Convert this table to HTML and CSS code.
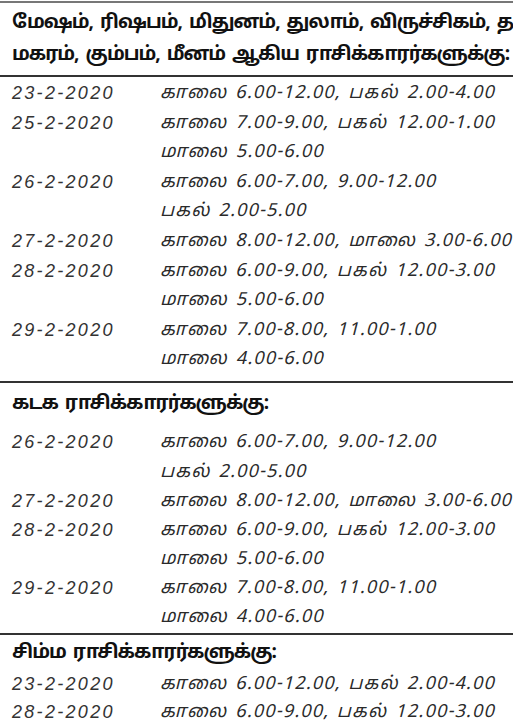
FILE: index.html
```html
<!DOCTYPE html>
<html lang="ta">
<head>
<meta charset="utf-8">
<link rel="stylesheet" href="styles.css">
</head>
<body>
<div class="page">
  <section class="block first">
    <h2 class="head two">மேஷம், ரிஷபம், மிதுனம், துலாம், விருச்சிகம், தனுசு,<br>மகரம், கும்பம், மீனம் ஆகிய ராசிக்காரர்களுக்கு:</h2>
    <div class="rows">
      <div class="row"><span class="date">23-2-2020</span><span class="time">காலை 6.00-12.00, பகல் 2.00-4.00</span></div>
      <div class="row"><span class="date">25-2-2020</span><span class="time">காலை 7.00-9.00, பகல் 12.00-1.00</span></div>
      <div class="row"><span class="date"></span><span class="time">மாலை 5.00-6.00</span></div>
      <div class="row"><span class="date">26-2-2020</span><span class="time">காலை 6.00-7.00, 9.00-12.00</span></div>
      <div class="row"><span class="date"></span><span class="time">பகல் 2.00-5.00</span></div>
      <div class="row"><span class="date">27-2-2020</span><span class="time">காலை 8.00-12.00, மாலை 3.00-6.00</span></div>
      <div class="row"><span class="date">28-2-2020</span><span class="time">காலை 6.00-9.00, பகல் 12.00-3.00</span></div>
      <div class="row"><span class="date"></span><span class="time">மாலை 5.00-6.00</span></div>
      <div class="row"><span class="date">29-2-2020</span><span class="time">காலை 7.00-8.00, 11.00-1.00</span></div>
      <div class="row"><span class="date"></span><span class="time">மாலை 4.00-6.00</span></div>
    </div>
  </section>
  <section class="block second">
    <h2 class="head">கடக ராசிக்காரர்களுக்கு:</h2>
    <div class="rows">
      <div class="row"><span class="date">26-2-2020</span><span class="time">காலை 6.00-7.00, 9.00-12.00</span></div>
      <div class="row"><span class="date"></span><span class="time">பகல் 2.00-5.00</span></div>
      <div class="row"><span class="date">27-2-2020</span><span class="time">காலை 8.00-12.00, மாலை 3.00-6.00</span></div>
      <div class="row"><span class="date">28-2-2020</span><span class="time">காலை 6.00-9.00, பகல் 12.00-3.00</span></div>
      <div class="row"><span class="date"></span><span class="time">மாலை 5.00-6.00</span></div>
      <div class="row"><span class="date">29-2-2020</span><span class="time">காலை 7.00-8.00, 11.00-1.00</span></div>
      <div class="row"><span class="date"></span><span class="time">மாலை 4.00-6.00</span></div>
    </div>
  </section>
  <section class="block third">
    <h2 class="head">சிம்ம ராசிக்காரர்களுக்கு:</h2>
    <div class="rows">
      <div class="row"><span class="date">23-2-2020</span><span class="time">காலை 6.00-12.00, பகல் 2.00-4.00</span></div>
      <div class="row"><span class="date">28-2-2020</span><span class="time">காலை 6.00-9.00, பகல் 12.00-3.00</span></div>
    </div>
  </section>
</div>
</body>
</html>
```
FILE: styles.css
```css
html, body {
  margin: 0;
  padding: 0;
  background: #fff;
  overflow: hidden;
}
body {
  width: 513px;
  height: 720px;
  color: #222;
  font-family: "Noto Sans Tamil", "Lohit Tamil", "Latha", "Liberation Sans", sans-serif;
}
.page {
  width: 560px;
  border-top: 2px solid #777;
  margin-top: 1px;
}
.block {
  border-top: 2px solid #333;
}
.block.first {
  border-top: none;
}
.head {
  margin: 0;
  padding: 0 12px;
  font-size: 19px;
  font-weight: bold;
  color: #111;
  white-space: nowrap;
  line-height: 42px;
  letter-spacing: -1px;
  word-spacing: 3px;
}
.head.two {
  line-height: 32px;
  padding-top: 4px;
  padding-bottom: 4px;
  border-bottom: 2px solid #333;
}
.third .head {
  line-height: 34px;
  padding-top: 1px;
}
.rows {
  display: flex;
  flex-direction: column;
}
.first .rows {
  padding-top: 2px;
  padding-bottom: 6px;
}
.second .rows {
  padding-top: 3.5px;
  padding-bottom: 1px;
}
.row {
  display: flex;
  height: 29px;
  line-height: 29px;
  white-space: nowrap;
  font-style: italic;
  font-size: 18px;
  color: #2a2a2a;
}
.first .row {
  height: 29.6px;
}
.second .row {
  height: 29.1px;
}
.third .row {
  height: 28px;
}
.date {
  width: 148px;
  padding-left: 12px;
  flex: none;
  font-family: "Liberation Sans", sans-serif;
  letter-spacing: 2.3px;
  color: #333;
}
.time {
  font-family: "Noto Sans Tamil", "Lohit Tamil", "Latha", "Liberation Sans", sans-serif;
  letter-spacing: 1.2px;
  word-spacing: 2px;
}
```
